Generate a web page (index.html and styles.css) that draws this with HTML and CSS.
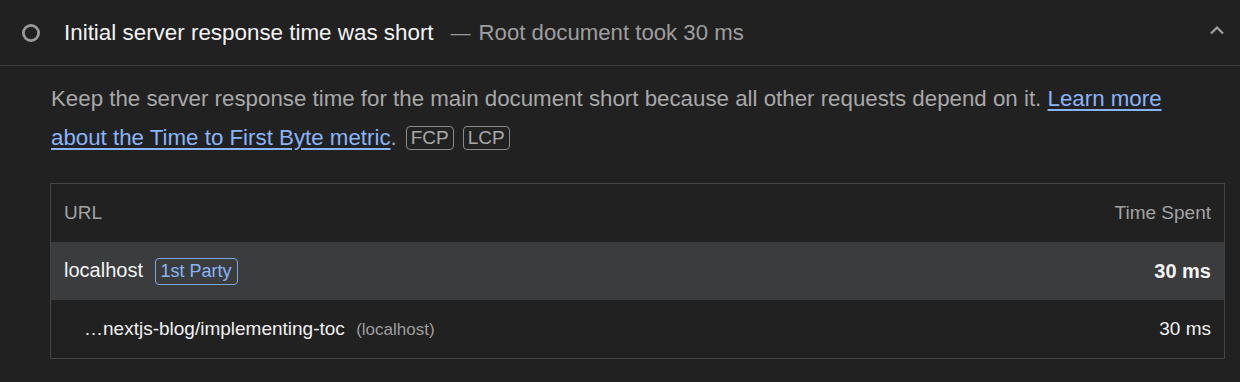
FILE: index.html
```html
<!DOCTYPE html>
<html lang="en">
<head>
    <meta charset="UTF-8" />
    <title>Lighthouse audit</title>
    <link rel="stylesheet" href="styles.css">
</head>
<body>
    <div class="audit">
        <div class="audit-header">
            <svg class="audit-icon" width="20" height="20" viewBox="0 0 20 20">
                <circle cx="10" cy="10" r="7.6" fill="none" stroke="#9a9a9a" stroke-width="2.8"/>
            </svg>
            <span class="audit-title">Initial server response time was short</span>
            <span class="audit-sep">&mdash;</span>
            <span class="audit-value">Root document took 30 ms</span>
            <svg class="chevron" width="16" height="10" viewBox="0 0 16 10">
                <path d="M2 8.5 L8 2.5 L14 8.5" fill="none" stroke="#a0a0a0" stroke-width="2.2"/>
            </svg>
        </div>

        <div class="audit-body">
            <p class="description">
                Keep the server response time for the main document short because all other requests depend on it. <a href="#">Learn more about the Time to First Byte metric</a>.<span class="metric">FCP</span><span class="metric">LCP</span>
            </p>

            <div class="table">
                <div class="row head">
                    <span>URL</span>
                    <span>Time Spent</span>
                </div>
                <div class="row group">
                    <span class="entity">localhost <span class="party">1st Party</span></span>
                    <span class="bold">30 ms</span>
                </div>
                <div class="row sub">
                    <span class="url">&hellip;nextjs-blog/implementing-toc <span class="host">(localhost)</span></span>
                    <span>30 ms</span>
                </div>
            </div>
        </div>
    </div>
</body>
</html>
```

FILE: styles.css
```css
body {
    margin: 0;
    background-color: #212121;
    font-family: 'Liberation Sans', Arial, sans-serif;
    color: #f1f1f1;
}

.audit-header {
    display: flex;
    align-items: center;
    height: 66px;
    padding: 1px 15px 0 21px;
    border-bottom: 1px solid #3d3d3d;
    box-sizing: border-box;
}

.audit-icon {
    margin-right: 23px;
}

.audit-title {
    font-size: 22.4px;
    color: #f3f3f3;
}

.audit-sep {
    font-size: 20px;
    color: #9a9a9a;
    margin: 0 8px 0 17px;
}

.audit-value {
    font-size: 22.2px;
    color: #9e9e9e;
    flex: 1;
}

.chevron {
    margin-top: -6px;
}

.audit-body {
    padding: 0 15px 0 50px;
}

.description {
    margin: 0;
    padding: 13px 40px 26px 1px;
    font-size: 22.3px;
    line-height: 39px;
    color: #a8a8a8;
}

.description a {
    color: #8ab4f8;
    text-decoration: underline;
    text-underline-offset: 3px;
}

.metric {
    display: inline-block;
    font-size: 19px;
    line-height: 20px;
    padding: 1px 4px;
    margin-left: 9px;
    border: 1px solid #8a8a8a;
    border-radius: 4px;
    color: #a8a8a8;
    vertical-align: 1px;
}

.table {
    border: 1px solid #444;
}

.row {
    display: flex;
    justify-content: space-between;
    align-items: center;
    height: 58px;
    padding: 0 13px;
    font-size: 20px;
}

.row.head {
    color: #a3a3a3;
    font-size: 19px;
}

.row.group {
    background-color: #3b3c3e;
    color: #f5f5f5;
}

.party {
    display: inline-block;
    margin-left: 6px;
    padding: 1px 5px;
    font-size: 18px;
    line-height: 23px;
    color: #8ab4f8;
    border: 1px solid #7fa6d8;
    border-radius: 4px;
}

.bold {
    font-weight: bold;
}

.row.sub {
    font-size: 19px;
}

.row.sub .url {
    padding-left: 20px;
}

.host {
    font-size: 17px;
    color: #9e9e9e;
    margin-left: 6px;
}
```
